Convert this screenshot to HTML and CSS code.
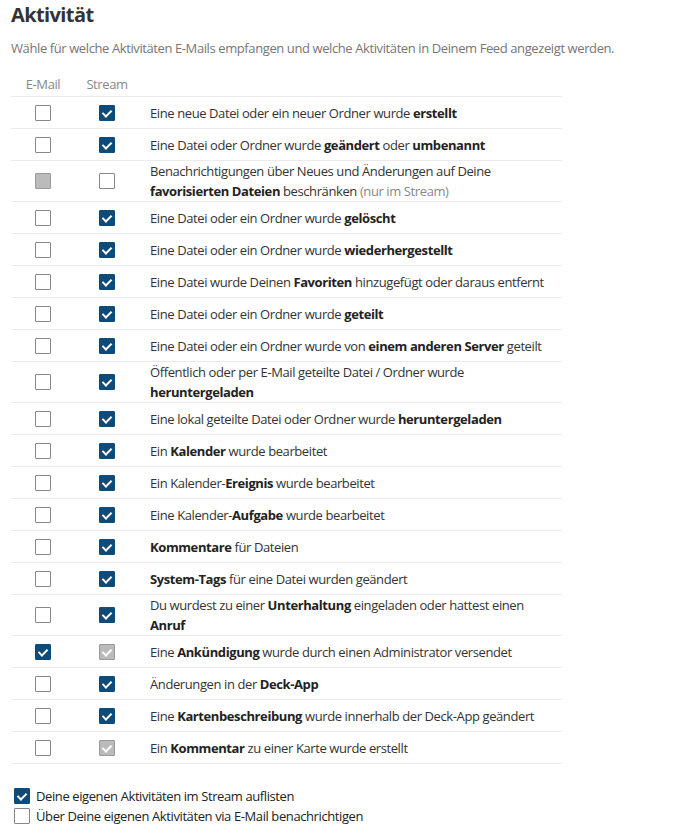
FILE: index.html
```html
<!DOCTYPE html>
<html lang="de">
<head>
<meta charset="utf-8">
<link rel="stylesheet" href="styles.css">
</head>
<body>
<div class="section">
  <h2 class="title">Aktivität</h2>
  <p class="desc">Wähle für welche Aktivitäten E-Mails empfangen und welche Aktivitäten in Deinem Feed angezeigt werden.</p>
  <table class="grid">
    <thead>
      <tr><th class="col">E-Mail</th><th class="col">Stream</th><th></th></tr>
    </thead>
    <tbody>
      <tr><td class="col"><span class="cb"></span></td><td class="col"><span class="cb on"></span></td><td class="txt">Eine neue Datei oder ein neuer Ordner wurde <b>erstellt</b></td></tr>
      <tr><td class="col"><span class="cb"></span></td><td class="col"><span class="cb on"></span></td><td class="txt">Eine Datei oder Ordner wurde <b>geändert</b> oder <b>umbenannt</b></td></tr>
      <tr><td class="col"><span class="cb dis"></span></td><td class="col"><span class="cb"></span></td><td class="txt">Benachrichtigungen über Neues und Änderungen auf Deine<br><b>favorisierten Dateien</b> beschränken <span class="muted">(nur im Stream)</span></td></tr>
      <tr><td class="col"><span class="cb"></span></td><td class="col"><span class="cb on"></span></td><td class="txt">Eine Datei oder ein Ordner wurde <b>gelöscht</b></td></tr>
      <tr><td class="col"><span class="cb"></span></td><td class="col"><span class="cb on"></span></td><td class="txt">Eine Datei oder ein Ordner wurde <b>wiederhergestellt</b></td></tr>
      <tr><td class="col"><span class="cb"></span></td><td class="col"><span class="cb on"></span></td><td class="txt">Eine Datei wurde Deinen <b>Favoriten</b> hinzugefügt oder daraus entfernt</td></tr>
      <tr><td class="col"><span class="cb"></span></td><td class="col"><span class="cb on"></span></td><td class="txt">Eine Datei oder ein Ordner wurde <b>geteilt</b></td></tr>
      <tr><td class="col"><span class="cb"></span></td><td class="col"><span class="cb on"></span></td><td class="txt">Eine Datei oder ein Ordner wurde von <b>einem anderen Server</b> geteilt</td></tr>
      <tr><td class="col"><span class="cb"></span></td><td class="col"><span class="cb on"></span></td><td class="txt">Öffentlich oder per E-Mail geteilte Datei / Ordner wurde<br><b>heruntergeladen</b></td></tr>
      <tr><td class="col"><span class="cb"></span></td><td class="col"><span class="cb on"></span></td><td class="txt">Eine lokal geteilte Datei oder Ordner wurde <b>heruntergeladen</b></td></tr>
      <tr><td class="col"><span class="cb"></span></td><td class="col"><span class="cb on"></span></td><td class="txt">Ein <b>Kalender</b> wurde bearbeitet</td></tr>
      <tr><td class="col"><span class="cb"></span></td><td class="col"><span class="cb on"></span></td><td class="txt">Ein Kalender-<b>Ereignis</b> wurde bearbeitet</td></tr>
      <tr><td class="col"><span class="cb"></span></td><td class="col"><span class="cb on"></span></td><td class="txt">Eine Kalender-<b>Aufgabe</b> wurde bearbeitet</td></tr>
      <tr><td class="col"><span class="cb"></span></td><td class="col"><span class="cb on"></span></td><td class="txt"><b>Kommentare</b> für Dateien</td></tr>
      <tr><td class="col"><span class="cb"></span></td><td class="col"><span class="cb on"></span></td><td class="txt"><b>System-Tags</b> für eine Datei wurden geändert</td></tr>
      <tr><td class="col"><span class="cb"></span></td><td class="col"><span class="cb on"></span></td><td class="txt">Du wurdest zu einer <b>Unterhaltung</b> eingeladen oder hattest einen<br><b>Anruf</b></td></tr>
      <tr><td class="col"><span class="cb on"></span></td><td class="col"><span class="cb on dis"></span></td><td class="txt">Eine <b>Ankündigung</b> wurde durch einen Administrator versendet</td></tr>
      <tr><td class="col"><span class="cb"></span></td><td class="col"><span class="cb on"></span></td><td class="txt">Änderungen in der <b>Deck-App</b></td></tr>
      <tr><td class="col"><span class="cb"></span></td><td class="col"><span class="cb on"></span></td><td class="txt">Eine <b>Kartenbeschreibung</b> wurde innerhalb der Deck-App geändert</td></tr>
      <tr><td class="col"><span class="cb"></span></td><td class="col"><span class="cb on dis"></span></td><td class="txt">Ein <b>Kommentar</b> zu einer Karte wurde erstellt</td></tr>
    </tbody>
  </table>
  <div class="opts">
    <label class="opt"><span class="cb on"></span>Deine eigenen Aktivitäten im Stream auflisten</label>
    <label class="opt"><span class="cb"></span>Über Deine eigenen Aktivitäten via E-Mail benachrichtigen</label>
  </div>
</div>
</body>
</html>
```
FILE: styles.css
```css
html, body {
  margin: 0;
  padding: 0;
  background: #fff;
}
body {
  font-family: "Open Sans", "Noto Sans", sans-serif;
  font-size: 13px;
  letter-spacing: -0.4px;
  color: #333;
}
.section {
  padding: 0 0 0 11px;
}
.title {
  margin: 0;
  padding-top: 2px;
  font-size: 20px;
  line-height: 26px;
  font-weight: 700;
  letter-spacing: -0.6px;
  color: #333;
}
.desc {
  margin: 11px 0 0;
  line-height: 18px;
  color: #767676;
}
.grid {
  margin-top: 15px;
  border-collapse: collapse;
  width: 551px;
}
.grid th {
  font-weight: 400;
  color: #888;
  height: 24px;
  padding: 0;
  text-align: center;
  vertical-align: middle;
}
.grid td {
  border-top: 1px solid #ebebeb;
  border-bottom: 1px solid #ebebeb;
  padding: 0;
  height: 31px;
  vertical-align: middle;
}
.grid .col {
  width: 64px;
  text-align: center;
}
.grid .txt {
  padding-left: 11px;
  line-height: 20px;
  color: #333;
}
.grid td.col {
  line-height: 0;
}
b {
  font-weight: 700;
  color: #222;
}
.muted {
  color: #888;
}
.cb {
  display: inline-block;
  box-sizing: border-box;
  width: 16px;
  height: 16px;
  border: 1px solid #878787;
  border-radius: 1px;
  background: #fff;
  vertical-align: middle;
  position: relative;
}
.cb.on {
  background: #0e4b78;
  border-color: #0e4b78;
}
.cb.on::after {
  content: "";
  position: absolute;
  left: 4px;
  top: 2px;
  width: 4px;
  height: 7px;
  border: solid #fff;
  border-width: 0 2px 2px 0;
  transform: rotate(45deg);
}
.cb.dis {
  background: #bbb;
  border-color: #999;
}
.cb.on.dis {
  background: #bbb;
  border-color: #999;
}
.opts {
  margin-top: 23px;
  display: flex;
  flex-direction: column;
  gap: 2px;
  padding-left: 3px;
}
.opt {
  display: flex;
  align-items: center;
  gap: 6px;
  color: #222;
  line-height: 18px;
}
```
